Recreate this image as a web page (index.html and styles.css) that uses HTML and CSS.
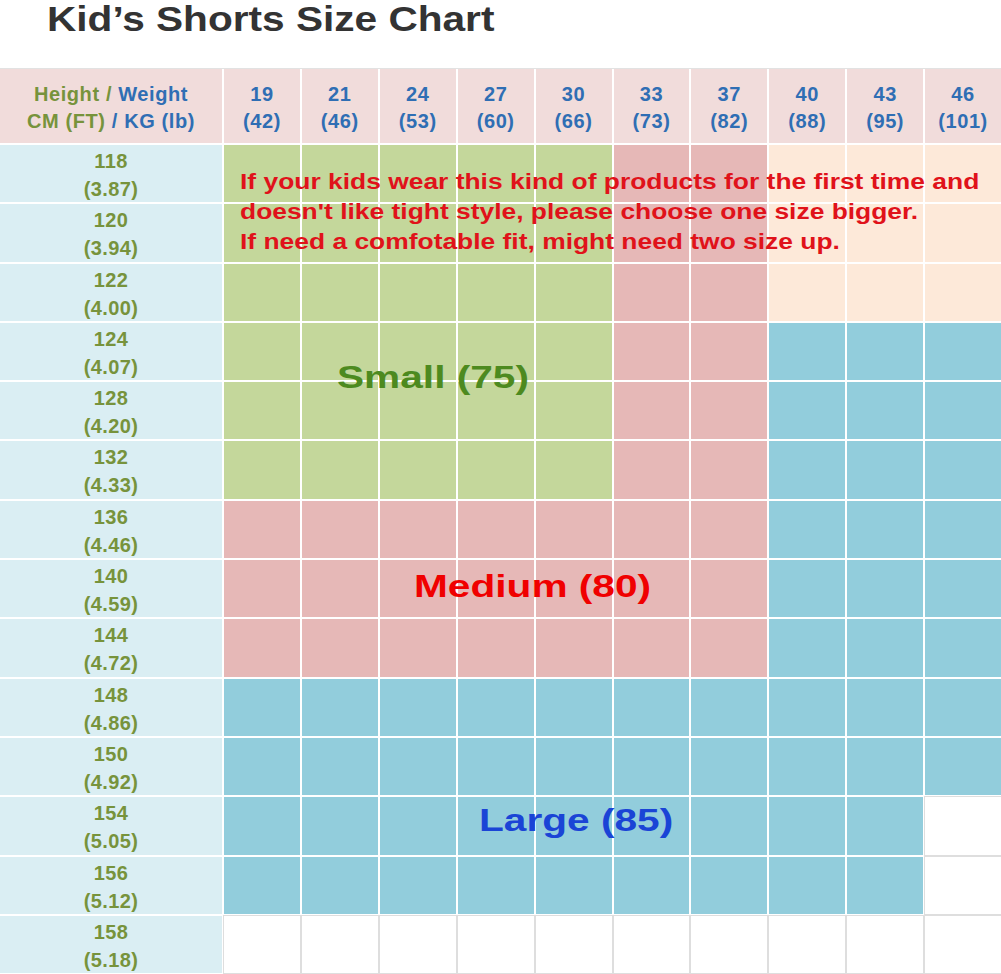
FILE: index.html
```html
<!DOCTYPE html>
<html>
<head>
<meta charset="utf-8">
<link rel="stylesheet" href="styles.css">
</head>
<body>
<div class="title-row"><h1 class="title">Kid’s Shorts Size Chart</h1></div>
<div class="chart">
  <div class="grid">
    <div class="hd first"><span class="ol">Height</span> <span class="ol">/</span> <span class="bl">Weight</span><br><span class="ol">CM (FT)</span> <span class="bl">/ KG (lb)</span></div>
    <div class="hd">19<br>(42)</div>
    <div class="hd">21<br>(46)</div>
    <div class="hd">24<br>(53)</div>
    <div class="hd">27<br>(60)</div>
    <div class="hd">30<br>(66)</div>
    <div class="hd">33<br>(73)</div>
    <div class="hd">37<br>(82)</div>
    <div class="hd">40<br>(88)</div>
    <div class="hd">43<br>(95)</div>
    <div class="hd">46<br>(101)</div>

    <div class="rh">118<br>(3.87)</div>
    <div class="g"></div><div class="g"></div><div class="g"></div><div class="g"></div><div class="g"></div><div class="p"></div><div class="p"></div><div class="c"></div><div class="c"></div><div class="c"></div>
    <div class="rh">120<br>(3.94)</div>
    <div class="g"></div><div class="g"></div><div class="g"></div><div class="g"></div><div class="g"></div><div class="p"></div><div class="p"></div><div class="c"></div><div class="c"></div><div class="c"></div>
    <div class="rh">122<br>(4.00)</div>
    <div class="g"></div><div class="g"></div><div class="g"></div><div class="g"></div><div class="g"></div><div class="p"></div><div class="p"></div><div class="c"></div><div class="c"></div><div class="c"></div>
    <div class="rh">124<br>(4.07)</div>
    <div class="g"></div><div class="g"></div><div class="g"></div><div class="g"></div><div class="g"></div><div class="p"></div><div class="p"></div><div class="b"></div><div class="b"></div><div class="b"></div>
    <div class="rh">128<br>(4.20)</div>
    <div class="g"></div><div class="g"></div><div class="g"></div><div class="g"></div><div class="g"></div><div class="p"></div><div class="p"></div><div class="b"></div><div class="b"></div><div class="b"></div>
    <div class="rh">132<br>(4.33)</div>
    <div class="g"></div><div class="g"></div><div class="g"></div><div class="g"></div><div class="g"></div><div class="p"></div><div class="p"></div><div class="b"></div><div class="b"></div><div class="b"></div>
    <div class="rh">136<br>(4.46)</div>
    <div class="p"></div><div class="p"></div><div class="p"></div><div class="p"></div><div class="p"></div><div class="p"></div><div class="p"></div><div class="b"></div><div class="b"></div><div class="b"></div>
    <div class="rh">140<br>(4.59)</div>
    <div class="p"></div><div class="p"></div><div class="p"></div><div class="p"></div><div class="p"></div><div class="p"></div><div class="p"></div><div class="b"></div><div class="b"></div><div class="b"></div>
    <div class="rh">144<br>(4.72)</div>
    <div class="p"></div><div class="p"></div><div class="p"></div><div class="p"></div><div class="p"></div><div class="p"></div><div class="p"></div><div class="b"></div><div class="b"></div><div class="b"></div>
    <div class="rh">148<br>(4.86)</div>
    <div class="b"></div><div class="b"></div><div class="b"></div><div class="b"></div><div class="b"></div><div class="b"></div><div class="b"></div><div class="b"></div><div class="b"></div><div class="b"></div>
    <div class="rh">150<br>(4.92)</div>
    <div class="b"></div><div class="b"></div><div class="b"></div><div class="b"></div><div class="b"></div><div class="b"></div><div class="b"></div><div class="b"></div><div class="b"></div><div class="b"></div>
    <div class="rh">154<br>(5.05)</div>
    <div class="b"></div><div class="b"></div><div class="b"></div><div class="b"></div><div class="b"></div><div class="b"></div><div class="b"></div><div class="b"></div><div class="b"></div><div class="w"></div>
    <div class="rh">156<br>(5.12)</div>
    <div class="b"></div><div class="b"></div><div class="b"></div><div class="b"></div><div class="b"></div><div class="b"></div><div class="b"></div><div class="b"></div><div class="b"></div><div class="w"></div>
    <div class="rh">158<br>(5.18)</div>
    <div class="w"></div><div class="w"></div><div class="w"></div><div class="w"></div><div class="w"></div><div class="w"></div><div class="w"></div><div class="w"></div><div class="w"></div><div class="w"></div>
  </div>
  <p class="note">If your kids wear this kind of products for the first time and<br>doesn't like tight style, please choose one size bigger.<br>If need a comfotable fit, might need two size up.</p>
  <div class="label small">Small (75)</div>
  <div class="label medium">Medium (80)</div>
  <div class="label large">Large (85)</div>
</div>
</body>
</html>
```
FILE: styles.css
```css
html, body {
  margin: 0;
  padding: 0;
  background: #ffffff;
}
body {
  font-family: "Liberation Sans", Arial, sans-serif;
  width: 1001px;
  height: 974px;
  overflow: hidden;
}
.title-row {
  height: 68px;
  padding-left: 47px;
}
.title {
  display: inline-block;
  margin: 0;
  font-size: 35px;
  line-height: 38px;
  font-weight: bold;
  color: #333333;
  white-space: nowrap;
  transform: scaleX(1.16);
  transform-origin: left center;
}
.chart {
  position: relative;
}
.grid {
  display: grid;
  grid-template-columns: 222px repeat(10, 1fr);
  grid-template-rows: 74px repeat(14, 57.3px);
  gap: 2px;
  background: #ffffff;
  border-top: 1px solid #e2e2e2;
}
.grid > div {
  font-weight: bold;
}
.hd {
  background: #f1dcdb;
  color: #2f6eb4;
  font-size: 20px;
  line-height: 27px;
  letter-spacing: 0.6px;
  padding-top: 4px;
  display: flex;
  align-items: center;
  justify-content: center;
  text-align: center;
}
.hd.first {
  display: block;
  padding-top: 12px;
}
.ol { color: #77933c; }
.bl { color: #2f6eb4; }
.rh {
  background: #daeef3;
  color: #77933c;
  font-size: 20px;
  line-height: 28px;
  letter-spacing: 0.4px;
  text-align: center;
  padding-top: 2px;
}
.g { background: #c4d79b; }
.p { background: #e6b8b7; }
.c { background: #fde9d9; }
.b { background: #92cddc; }
.w {
  background: #ffffff;
  box-shadow: 0 0 0 1px #dedede;
}
.note {
  position: absolute;
  left: 240px;
  top: 99px;
  margin: 0;
  font-size: 22px;
  line-height: 30px;
  font-weight: bold;
  color: #e0121a;
  white-space: nowrap;
  transform: scaleX(1.2);
  transform-origin: left top;
}
.label {
  position: absolute;
  font-size: 32px;
  line-height: 36px;
  font-weight: bold;
  white-space: nowrap;
  transform: scaleX(1.27);
  transform-origin: left center;
}
.small { left: 337px; top: 291px; color: #4d8a1f; }
.medium { left: 414px; top: 500px; color: #f00000; }
.large { left: 479px; top: 734px; color: #1a44d6; }
```
